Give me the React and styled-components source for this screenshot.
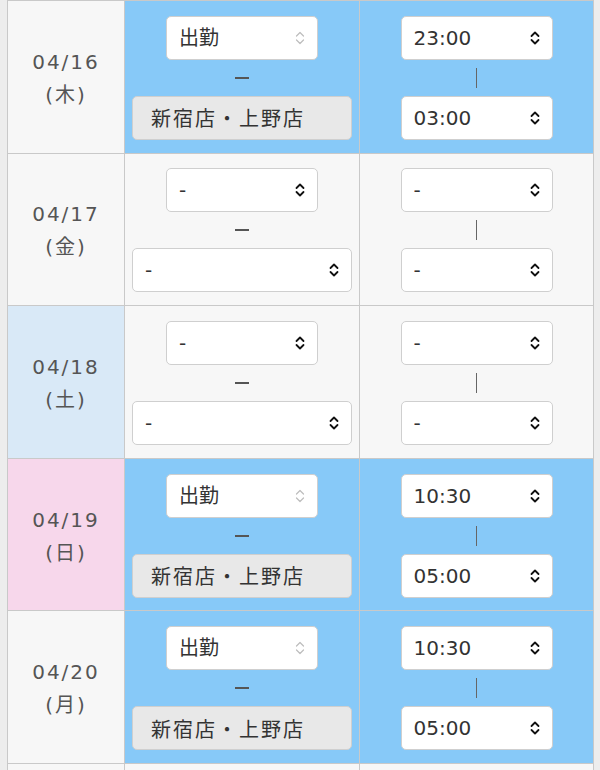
import React from 'react';
import styled, { createGlobalStyle } from 'styled-components';

const GlobalStyle = createGlobalStyle`
  html, body {
    margin: 0;
    padding: 0;
    background: #ededed;
    font-family: "DejaVu Sans", "Noto Sans CJK JP", sans-serif;
  }
`

const rows = [
  { date: '04/16', day: '木', tone: 'plain', work: '出勤', store: '新宿店・上野店', from: '23:00', to: '03:00' },
  { date: '04/17', day: '金', tone: 'plain' },
  { date: '04/18', day: '土', tone: 'sat' },
  { date: '04/19', day: '日', tone: 'sun', work: '出勤', store: '新宿店・上野店', from: '10:30', to: '05:00' },
  { date: '04/20', day: '月', tone: 'plain', work: '出勤', store: '新宿店・上野店', from: '10:30', to: '05:00' },
];

const dateBg = { plain: '#f7f7f7', sat: '#d9e9f7', sun: '#f7d7eb' };

function Chevrons({ light }) {
  return (
    <Arrow width="10" height="18" viewBox="0 0 10 18" $light={light}>
      <path d="M1.5 7 L5 3.5 L8.5 7" />
      <path d="M1.5 11 L5 14.5 L8.5 11" />
    </Arrow>
  )
}

function SelectBox({ value, wide, light }) {
  return (
    <SelectWrap $wide={wide}>
      <Select defaultValue={value} disabled={light}>
        <option value={value}>{value}</option>
      </Select>
      <Chevrons light={light} />
    </SelectWrap>
  )
}

function App() {
  return (
    <>
      <GlobalStyle />
      <Page>
        <Table>
          {rows.map(r => {
            const on = !!r.work;
            return (
              <React.Fragment key={r.date}>
                <DateCell $bg={dateBg[r.tone]}>
                  <span>{r.date}</span>
                  <span>({r.day})</span>
                </DateCell>
                <Cell $on={on}>
                  {on ? <SelectBox value={r.work} light /> : <SelectBox value="-" />}
                  <Dash />
                  {on ? <Store>{r.store}</Store> : <SelectBox value="-" wide />}
                </Cell>
                <Cell $on={on}>
                  <SelectBox value={on ? r.from : '-'} />
                  <Bar />
                  <SelectBox value={on ? r.to : '-'} />
                </Cell>
              </React.Fragment>
            )
          })}
          {/* next row, only its top edge is in view */}
          <DateCell $bg={dateBg.plain} />
          <Cell />
          <Cell />
        </Table>
      </Page>
    </>
  )
}

export default App;

const Page = styled.div`
  width: 600px;
  height: 770px;
  overflow: hidden;
  padding-left: 7px;
  box-sizing: border-box;
`
const Table = styled.div`
  display: grid;
  grid-template-columns: 116px 234px 233px;
  grid-auto-rows: 151.6px;
  gap: 1px;
  padding: 1px;
  width: 587px;
  box-sizing: border-box;
  background: #c9c9c9;
`
const DateCell = styled.div`
  background: ${p => p.$bg};
  display: flex;
  flex-direction: column;
  align-items: center;
  justify-content: center;
  color: #555;
  font-size: 20px;
  letter-spacing: 2px;
  line-height: 33px;
  padding-top: 4px;
  box-sizing: border-box;
`
const Cell = styled.div`
  background: ${p => (p.$on ? '#87c9f8' : '#f7f7f7')};
  display: flex;
  flex-direction: column;
  align-items: center;
  justify-content: center;
  padding-top: 2px;
  box-sizing: border-box;
`
const SelectWrap = styled.div`
  position: relative;
  width: ${p => (p.$wide ? '220px' : '152px')};
  height: 44px;
`
const Select = styled.select`
  appearance: none;
  -webkit-appearance: none;
  width: 100%;
  height: 100%;
  margin: 0;
  box-sizing: border-box;
  border: 1px solid #cfcfcf;
  border-radius: 5px;
  background: #fff;
  color: #333;
  opacity: 1;
  font-family: "DejaVu Sans", "Noto Sans CJK JP", sans-serif;
  font-size: 20px;
  padding: 0 0 0 12px;
  outline: none;
  &:disabled {
    color: #333;
    background: #fff;
  }
`
const Arrow = styled.svg`
  position: absolute;
  right: 13px;
  top: 13px;
  pointer-events: none;
  fill: none;
  stroke: ${p => (p.$light ? '#bdbdbd' : '#111')};
  stroke-width: ${p => (p.$light ? 1.2 : 1.8)};
  stroke-linecap: round;
  stroke-linejoin: round;
`
const Store = styled.div`
  width: 220px;
  height: 44px;
  box-sizing: border-box;
  border: 1px solid #cfcfcf;
  border-radius: 5px;
  background: #e8e8e8;
  color: #333;
  font-family: "Noto Sans CJK JP", sans-serif;
  font-size: 20px;
  letter-spacing: 2px;
  display: flex;
  align-items: center;
  padding-left: 18px;
`
const Dash = styled.div`
  width: 14px;
  height: 2px;
  background: #555;
  margin: 17px 0;
`
const Bar = styled.div`
  width: 1px;
  height: 20px;
  background: #666;
  margin: 8px 0;
`
